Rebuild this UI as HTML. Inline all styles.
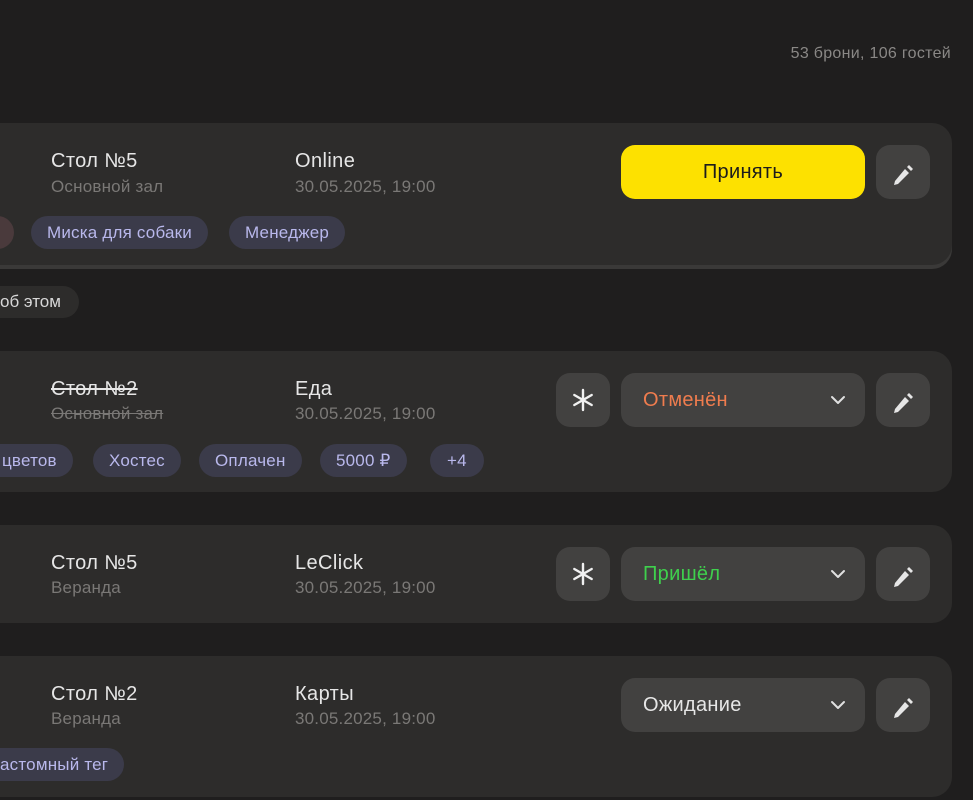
<!DOCTYPE html>
<html><head><meta charset="utf-8"><style>
*{margin:0;padding:0;box-sizing:border-box}
body{width:973px;height:800px;background:#1f1e1e;font-family:"Liberation Sans","Noto Sans CJK SC",sans-serif;position:relative;overflow:hidden;color:#e8e8e8}
.a{position:absolute}
.card{position:absolute;left:-30px;width:982px;background:#2d2c2b;border-radius:20px}
.t1{font-size:20px;letter-spacing:0.4px;color:#e6e6e6;white-space:nowrap}
.t2{font-size:17px;letter-spacing:0.2px;color:#7a7876;white-space:nowrap}
.tag{position:absolute;height:33px;border-radius:17px;background:#3b3b4a;color:#b9b8ec;font-size:17px;line-height:33px;padding:0 16px;white-space:nowrap;letter-spacing:0.2px}
.btn{position:absolute;width:54px;height:54px;border-radius:14px;background:#424140}
.sel{position:absolute;left:621px;width:244px;height:54px;border-radius:14px;background:#424140;font-size:20px;letter-spacing:0.3px;line-height:54px;padding-left:22px}
s{text-decoration-color:inherit}
</style></head><body>
<div class="a" style="right:22px;top:45px;font-size:16px;letter-spacing:0.3px;color:#8a8886">53 брони, 106 гостей</div>

<div class="card" style="top:128px;height:141px;background:#3a3938"></div>
<div class="card" style="top:123px;height:142px"></div>
<div class="a t1" style="left:51px;top:150px">Стол №5</div>
<div class="a t2" style="left:51px;top:177px">Основной зал</div>
<div class="a t1" style="left:295px;top:150px">Online</div>
<div class="a t2" style="left:295px;top:177px">30.05.2025, 19:00</div>
<div class="tag" style="left:-20px;top:216px;width:34px;background:#4a3a3c"></div>
<div class="tag" style="left:31px;top:216px">Миска для собаки</div>
<div class="tag" style="left:229px;top:216px">Менеджер</div>
<div class="a" style="left:621px;top:145px;width:244px;height:54px;border-radius:14px;background:#fde100;color:#1c1c1c;font-size:20px;letter-spacing:0.3px;text-align:center;line-height:54px">Принять</div>
<div class="btn" style="left:876px;top:145px"></div>

<div class="a" style="left:-20px;top:286px;height:32px;border-radius:16px;background:#2d2c2b;color:#d8d8d8;font-size:17px;line-height:32px;padding:0 18px 0 20px">об этом</div>

<div class="card" style="top:351px;height:141px"></div>
<div class="a t1" style="left:51px;top:378px"><s>Стол №2</s></div>
<div class="a t2" style="left:51px;top:404px"><s>Основной зал</s></div>
<div class="a t1" style="left:295px;top:378px">Еда</div>
<div class="a t2" style="left:295px;top:404px">30.05.2025, 19:00</div>
<div class="tag" style="left:-30px;top:444px;padding-left:32px">цветов</div>
<div class="tag" style="left:93px;top:444px">Хостес</div>
<div class="tag" style="left:199px;top:444px">Оплачен</div>
<div class="tag" style="left:320px;top:444px">5000 ₽</div>
<div class="tag" style="left:430px;top:444px;padding:0 17px">+4</div>
<div class="btn" style="left:556px;top:373px"></div>
<div class="sel" style="top:373px;color:#ef7c4e">Отменён</div>
<div class="btn" style="left:876px;top:373px"></div>

<div class="card" style="top:525px;height:98px"></div>
<div class="a t1" style="left:51px;top:552px">Стол №5</div>
<div class="a t2" style="left:51px;top:578px">Веранда</div>
<div class="a t1" style="left:295px;top:552px">LeClick</div>
<div class="a t2" style="left:295px;top:578px">30.05.2025, 19:00</div>
<div class="btn" style="left:556px;top:547px"></div>
<div class="sel" style="top:547px;color:#3fd04d">Пришёл</div>
<div class="btn" style="left:876px;top:547px"></div>

<div class="card" style="top:656px;height:141px"></div>
<div class="a t1" style="left:51px;top:683px">Стол №2</div>
<div class="a t2" style="left:51px;top:709px">Веранда</div>
<div class="a t1" style="left:295px;top:683px">Карты</div>
<div class="a t2" style="left:295px;top:709px">30.05.2025, 19:00</div>
<div class="tag" style="left:-38px;top:748px;padding-left:30px">кастомный тег</div>
<div class="sel" style="top:678px;color:#e6e6e6">Ожидание</div>
<div class="btn" style="left:876px;top:678px"></div>

<svg class="a" style="left:0;top:0" width="973" height="800">
<defs>
<g id="pen"><path d="M-8 9 L-9 13 L-5 12 L6 1 L2 -3 Z" fill="#e6e6e6"/><path d="M4 -5 L6 -7 L10 -3 L8 -1 Z" fill="#e6e6e6"/></g>
<g id="ast" stroke="#f0f0f0" stroke-width="2.4" stroke-linecap="round"><path d="M0 -10V10M-8.7 -5L8.7 5M-8.7 5L8.7 -5"/></g>
<path id="ch" d="M-6 -3 L0 3 L6 -3" fill="none" stroke="#e0e0e0" stroke-width="2" stroke-linecap="round" stroke-linejoin="round"/>
</defs>
<use href="#pen" x="903" y="172"/>
<use href="#pen" x="903" y="400"/>
<use href="#pen" x="903" y="574"/>
<use href="#pen" x="903" y="705"/>
<use href="#ast" x="583" y="400"/>
<use href="#ast" x="583" y="574"/>
<use href="#ch" x="838" y="400"/>
<use href="#ch" x="838" y="574"/>
<use href="#ch" x="838" y="705"/>
</svg>
</body></html>
